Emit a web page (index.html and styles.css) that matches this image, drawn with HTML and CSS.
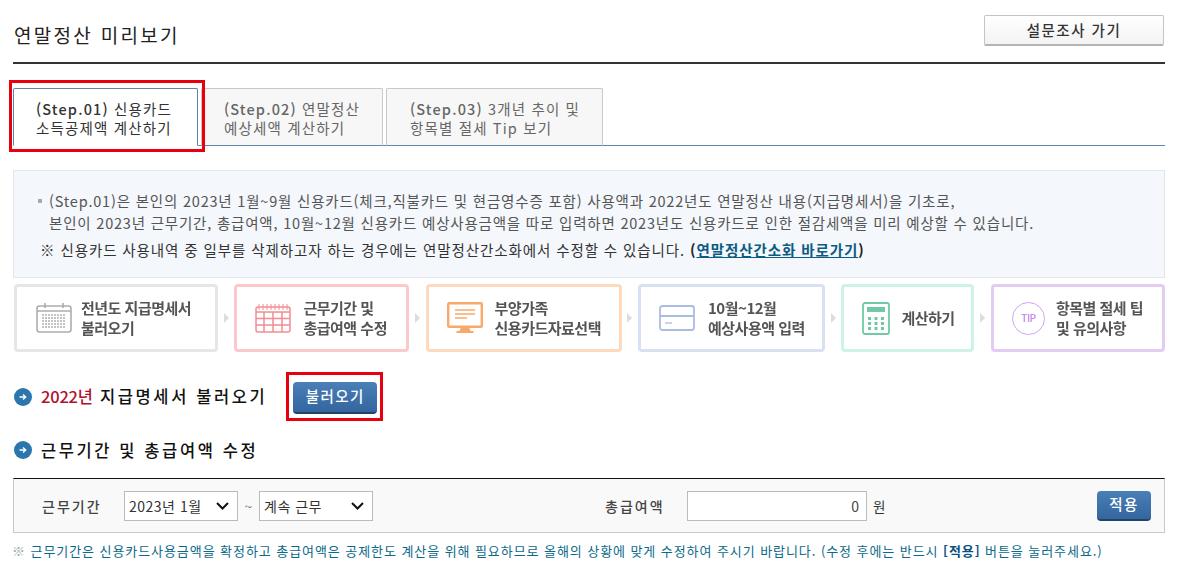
FILE: index.html
```html
<!DOCTYPE html>
<html lang="ko">
<head>
<meta charset="utf-8">
<title>연말정산 미리보기</title>
<link rel="stylesheet" href="styles.css">
</head>
<body>
<div class="page">
  <header class="head">
    <h1 class="title">연말정산 미리보기</h1>
    <button class="survey">설문조사 가기</button>
  </header>

  <nav class="tabs">
    <a class="tab tab-one active"><b>(Step.01)</b> 신용카드<br>소득공제액 계산하기</a>
    <a class="tab tab-two"><b>(Step.02)</b> 연말정산<br>예상세액 계산하기</a>
    <a class="tab tab-three"><b>(Step.03)</b> 3개년 추이 및<br>항목별 절세 Tip 보기</a>
  </nav>

  <section class="info">
    <p class="info-line"><span class="square"></span>(Step.01)은 본인의 2023년 1월~9월 신용카드(체크,직불카드 및 현금영수증 포함) 사용액과 2022년도 연말정산 내용(지급명세서)을 기초로,</p>
    <p class="info-line indent">본인이 2023년 근무기간, 총급여액, 10월~12월 신용카드 예상사용금액을 따로 입력하면 2023년도 신용카드로 인한 절감세액을 미리 예상할 수 있습니다.</p>
    <p class="info-note">※ 신용카드 사용내역 중 일부를 삭제하고자 하는 경우에는 연말정산간소화에서 수정할 수 있습니다. <b>(<a class="info-link">연말정산간소화 바로가기</a>)</b></p>
  </section>

  <div class="steps">
    <div class="step s-grey">
      <svg class="ico" width="36" height="32" viewBox="0 0 36 32" fill="none" stroke="#adadad" stroke-width="1.6"><rect x="1" y="4" width="34" height="26" rx="2.5"/><path d="M1 9h34M9 1v5M27 1v5"/><path d="M6 13h24M6 16h24M6 19h24M6 22h24M6 25h24" stroke="#c4c4c4" stroke-width="1.8" stroke-dasharray="2 1"/></svg>
      <span>전년도 지급명세서<br>불러오기</span>
    </div>
    <i class="chev"></i>
    <div class="step s-pink">
      <svg class="ico" width="36" height="30" viewBox="0 0 36 30" fill="none" stroke="#f28d95" stroke-width="1.5"><rect x="1" y="4" width="34" height="25" rx="2"/><path d="M1 9h34M1 15.500h34M1 22h34M9 9v20M18 9v20M27 9v20"/><path d="M4 1v6M8 1v6M12 1v6M16 1v6M20 1v6M24 1v6M28 1v6M32 1v6" stroke-width="1"/></svg>
      <span>근무기간 및<br>총급여액 수정</span>
    </div>
    <i class="chev"></i>
    <div class="step s-orange">
      <svg class="ico" width="36" height="32" viewBox="0 0 36 32"><rect x="1.200" y="1.200" width="33.600" height="23.600" rx="1" fill="#fff" stroke="#f9a869" stroke-width="2.400"/><path d="M8 8h20M8 12h20M8 16h12" stroke="#f9a869" stroke-width="1.300"/><path d="M14 25h8l1.500 4h3v2h-17v-2h3z" fill="#f9a869"/></svg>
      <span>부양가족<br>신용카드자료선택</span>
    </div>
    <i class="chev"></i>
    <div class="step s-blue">
      <svg class="ico" width="36" height="26" viewBox="0 0 36 26" fill="none" stroke="#a9bde0" stroke-width="1.800"><rect x="1" y="1" width="34" height="24" rx="2.500"/><path d="M1 11h34"/><path d="M6 18h7" stroke-width="1.300"/></svg>
      <span>10월~12월<br>예상사용액 입력</span>
    </div>
    <i class="chev"></i>
    <div class="step s-green">
      <svg class="ico" width="28" height="33" viewBox="0 0 28 33"><rect x="1" y="1" width="26" height="31" rx="2" fill="#fff" stroke="#6fcaa3" stroke-width="1.800"/><rect x="5" y="5" width="18" height="5" fill="#6fcaa3"/><path d="M6 15h3v3h-3zM12.500 15h3v3h-3zM19 15h3v3h-3zM6 20h3v3h-3zM12.500 20h3v3h-3zM19 20h3v3h-3zM6 25h3v3h-3zM12.500 25h3v3h-3zM19 25h3v3h-3z" fill="#6fcaa3"/></svg>
      <span>계산하기</span>
    </div>
    <i class="chev"></i>
    <div class="step s-purple">
      <div class="tip">TIP</div>
      <span>항목별 절세 팁<br>및 유의사항</span>
    </div>
  </div>

  <div class="row-load">
    <svg class="bullet" width="18" height="18" viewBox="0 0 18 18"><circle cx="9" cy="9" r="9" fill="#2a76ad"/><path d="M5.500 9h6M9 6.500l2.700 2.500-2.700 2.500" fill="none" stroke="#fff" stroke-width="1.400"/></svg>
    <h2 class="heading"><em>2022년</em> 지급명세서 불러오기</h2>
    <button class="btn btn-load">불러오기</button>
  </div>

  <div class="row-edit">
    <svg class="bullet" width="18" height="18" viewBox="0 0 18 18"><circle cx="9" cy="9" r="9" fill="#2a76ad"/><path d="M5.500 9h6M9 6.500l2.700 2.500-2.700 2.500" fill="none" stroke="#fff" stroke-width="1.400"/></svg>
    <h2 class="heading">근무기간 및 총급여액 수정</h2>
  </div>

  <div class="form">
    <label class="lab lab-period">근무기간</label>
    <select class="sel"><option>2023년 1월</option></select>
    <span class="tilde">~</span>
    <select class="sel"><option>계속 근무</option></select>
    <label class="lab lab-pay">총급여액</label>
    <input class="amount" type="text" value="0">
    <span class="won">원</span>
    <button class="btn btn-apply">적용</button>
  </div>

  <p class="note"><span class="mark">※</span> 근무기간은 신용카드사용금액을 확정하고 총급여액은 공제한도 계산을 위해 필요하므로 올해의 상황에 맞게 수정하여 주시기 바랍니다. (수정 후에는 반드시 <b>[적용]</b> 버튼을 눌러주세요.)</p>
</div>
</body>
</html>
```

FILE: styles.css
```css
* { box-sizing: border-box; }
html, body { margin: 0; padding: 0; background: #fff; }
body { font-family: "Noto Sans CJK KR", "Liberation Sans", sans-serif; color: #333; overflow: hidden; }
.page { width: 1165px; height: 583px; margin-left: 13px; padding-top: 15px; }
p, h1, h2 { margin: 0; font-weight: 400; }

.head { height: 49px; display: flex; justify-content: space-between; align-items: flex-start; border-bottom: 2px solid #333; width: 1152px; }
.title { font-size: 19px; line-height: 26px; margin: 7px 0 0 1px; color: #222; letter-spacing: 2.3px; }
.survey { width: 180px; height: 31px; margin-right: 1px; padding-bottom: 3px; font: 500 14.500px "Noto Sans CJK KR", sans-serif; color: #333; letter-spacing: 1.5px; background: linear-gradient(#fff, #f3f3f3); border: 1px solid #c4c4c4; border-bottom: 2px solid #b4b4b4; border-radius: 2px; }

.tabs { width: 1152px; height: 58px; margin-top: 24px; display: flex; gap: 3px; border-bottom: 1px solid #5d86ad; }
.tab { height: 58px; padding-top: 10px; font-size: 14.500px; line-height: 19px; color: #666; letter-spacing: 1.15px; background: #f7f7f7; border: 1px solid #c9c9c9; border-bottom: 1px solid #5d86ad; border-radius: 2px 2px 0 0; white-space: nowrap; }
.tab b { font-weight: 500; }
.tab-one { width: 185px; padding-left: 22px; color: #333; background: #fff; border-color: #5d86ad; border-bottom-color: #fff; position: relative; }
.tab-one::after { content: ""; position: absolute; inset: -9px -8px -7px -5px; border: 3px solid #e8000e; pointer-events: none; }
.tab-two { width: 182px; padding-left: 22px; }
.tab-three { width: 217px; padding-left: 23px; }

.info { width: 1152px; height: 108px; margin-top: 24px; padding: 18px 0 0 26px; background: #f4f7fc; border: 1px solid #e3e7ec; font-size: 14.500px; }
.info-line { line-height: 24px; color: #555; letter-spacing: 0.8px; white-space: nowrap; position: relative; padding-left: 9px; }
.indent { line-height: 20px; }
.square { position: absolute; left: -2px; top: 10px; width: 4px; height: 4px; background: #aaa; }
.info-note { line-height: 24px; margin-top: 5px; color: #333; letter-spacing: 0.91px; white-space: nowrap; }
.info-link { color: #0b5c82; text-decoration: underline; }
.info-note b { font-weight: 700; color: #222; }

.steps { width: 1152px; height: 68px; margin-top: 6px; display: flex; align-items: center; justify-content: space-between; }
.chev { width: 0; height: 0; flex: none; border-left: 5px solid #dcdcdc; border-top: 5px solid transparent; border-bottom: 5px solid transparent; }
.step { height: 68px; display: flex; align-items: center; background: #fff; border: 3px solid; border-radius: 4px; font-size: 15px; line-height: 20px; font-weight: 700; color: #555; letter-spacing: -0.5px; white-space: nowrap; filter: blur(0.4px); }
.ico { flex: none; }
.s-grey { width: 204px; border-color: #e6e6e6; padding-left: 19px; gap: 9px; margin-left: 1px; }
.s-pink { width: 174.600px; border-color: #fbc9cc; padding-left: 18px; gap: 12px; }
.s-orange { width: 196px; border-color: #fdd9bd; padding-left: 18px; gap: 12px; }
.s-blue { width: 187px; border-color: #d7e1f3; padding-left: 18px; gap: 13px; }
.s-green { width: 133px; border-color: #cdf3e4; padding-left: 18px; gap: 11px; }
.s-purple { width: 174px; border-color: #e2cdf1; padding-left: 18px; gap: 11px; }
.tip { width: 33px; height: 33px; flex: none; border: 1.500px solid #cfa6f2; border-radius: 50%; color: #c78ff0; font: 600 10px/30px "Inter", sans-serif; letter-spacing: -0.3px; text-align: center; }

.row-load { height: 32px; margin-top: 30px; display: flex; align-items: flex-start; padding-left: 1px; }
.row-load .bullet { margin-top: 6px; }
.row-load .heading { line-height: 28px; }
.row-edit { height: 24px; margin-top: 24px; display: flex; align-items: center; padding-left: 1px; }
.bullet { flex: none; }
.heading { margin-left: 9px; font-size: 16.500px; line-height: 24px; font-weight: 500; color: #111; letter-spacing: 2.6px; white-space: nowrap; }
.heading em { font-style: normal; color: #b01030; letter-spacing: -0.2px; }
.btn { height: 32px; padding-bottom: 4px; font: 500 14.500px "Noto Sans CJK KR", sans-serif; color: #fff; letter-spacing: 1.400px; background: linear-gradient(#4a7fb8, #34659f); border: 0; border-bottom: 2px solid #1f4468; border-radius: 4px; }
.btn-load { width: 84px; margin-left: 26px; position: relative; }
.btn-load::after { content: ""; position: absolute; inset: -10px -6px -9px -7px; border: 3px solid #e8000e; pointer-events: none; }

.form { width: 1152px; height: 55px; margin-top: 16px; display: flex; align-items: center; background: #f9f9f9; border: 1px solid #c8c8c8; border-top: 1px solid #111; padding-left: 28px; font-size: 14px; }
.lab { font-weight: 500; color: #444; letter-spacing: 2px; white-space: nowrap; width: 60px; }
.lab-period { margin-right: 22px; }
.lab-pay { margin-left: 232px; margin-right: 22px; }
.sel { appearance: none; width: 114px; height: 30px; font: 14px "Noto Sans CJK KR", sans-serif; letter-spacing: 0.5px; color: #333; border: 1px solid #bbb; border-radius: 0; padding-left: 4px; background: #fff url("data:image/svg+xml;utf8,<svg xmlns='http://www.w3.org/2000/svg' width='13' height='8' viewBox='0 0 13 8'><path d='M1 1l5.500 5.500L12 1' fill='none' stroke='%23111' stroke-width='2'/></svg>") no-repeat right 8px center; }
.tilde { width: 21px; text-align: center; color: #777; }
.amount { width: 180px; height: 30px; text-align: right; font: 14px "Noto Sans CJK KR", sans-serif; color: #444; background: #fff; border: 1px solid #bbb; padding: 0 7px; border-radius: 0; }
.won { margin-left: 6px; font-size: 13.500px; width: 18px; }
.btn-apply { width: 54px; height: 30px; margin-left: 206px; }

.note { margin: 9px 0 0 -1px; font-size: 13px; line-height: 18px; color: #0b6a8a; letter-spacing: 0.93px; white-space: nowrap; }
.note .mark { color: #9aa; }
.note b { font-weight: 700; color: #0b4f80; }
```
